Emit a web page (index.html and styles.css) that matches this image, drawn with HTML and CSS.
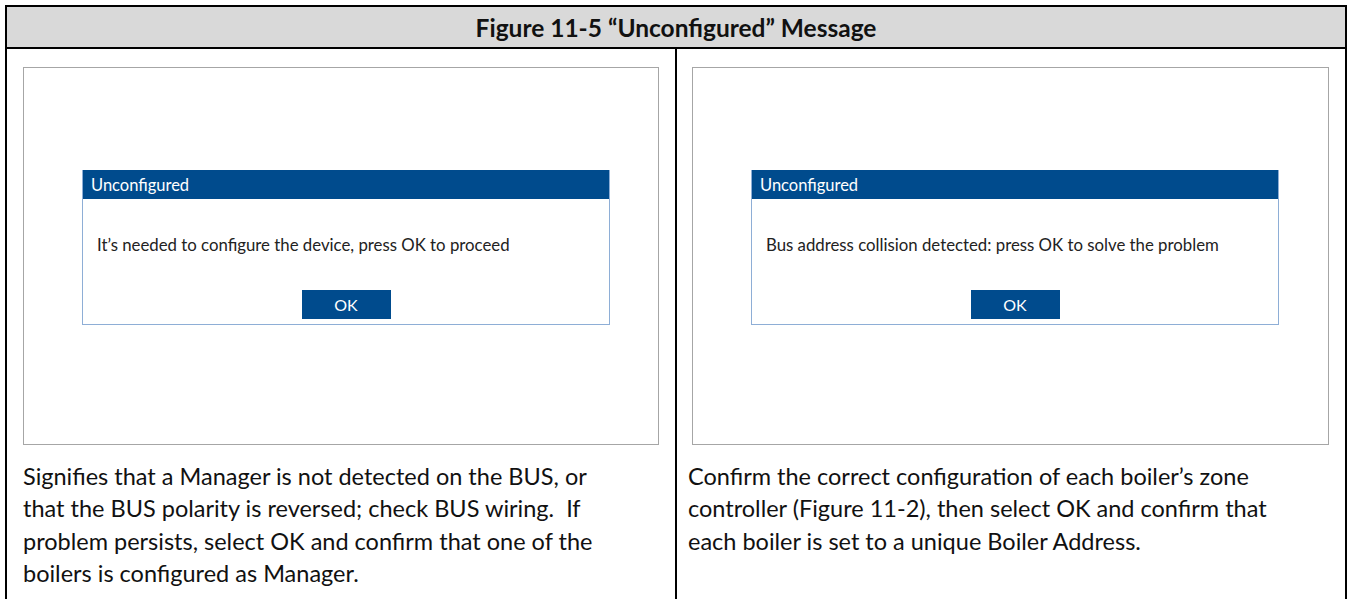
FILE: index.html
```html
<!DOCTYPE html>
<html>
  <head>
    <link rel="stylesheet" href="styles.css">
  </head>
<body>
<div class="figure">
  <div class="figure-title">Figure 11-5 “Unconfigured” Message</div>
  <div class="figure-body">
    <!--Left column: manager not detected-->
    <div class="cell cell-left">
      <div class="screen">
        <div class="dialog">
          <div class="dialog-title">Unconfigured</div>
          <div class="dialog-msg">It’s needed to configure the device, press OK to proceed</div>
          <div class="dialog-actions"><span class="ok-btn">OK</span></div>
        </div>
      </div>
      <p class="caption">Signifies that a Manager is not detected on the BUS, or that the BUS polarity is reversed; check BUS wiring.&nbsp; If problem persists, select OK and confirm that one of the boilers is configured as Manager.</p>
    </div>
    <!--Right column: address collision-->
    <div class="cell cell-right">
      <div class="screen">
        <div class="dialog">
          <div class="dialog-title">Unconfigured</div>
          <div class="dialog-msg">Bus address collision detected: press OK to solve the problem</div>
          <div class="dialog-actions"><span class="ok-btn">OK</span></div>
        </div>
      </div>
      <p class="caption">Confirm the correct configuration of each boiler’s zone controller (Figure 11-2), then select OK and confirm that each boiler is set to a unique Boiler Address.</p>
    </div>
  </div>
</div>
</body>
</html>
```

FILE: styles.css
```css
body{
  margin: 5px 0 0 5px;
  background-color: #ffffff;
  font-family: Lato, "Open Sans", sans-serif;
  color: #000000;
}
.figure{
  width: 1338px;
  border: 2px solid #000000;
  border-bottom: none;
}
.figure-title{
  height: 40px;
  line-height: 42px;
  background-color: #d9d9d9;
  border-bottom: 2px solid #000000;
  text-align: center;
  font-weight: bold;
  font-size: 24.5px;
  color: #111111;
}
.figure-body{
  display: grid;
  grid-template-columns: 670px 1fr;
  height: 560px;
}
.cell{
  padding: 18px 16px 0 16px;
}
.cell-left{
  border-right: 2px solid #000000;
}
.cell-right{
  padding-left: 15px;
}
.screen{
  border: 1px solid #a6a6a6;
  padding-top: 102px;
  box-sizing: border-box;
  height: 378px;
}
.dialog{
  width: 526px;
  margin-left: 58px;
  border: 1px solid #8eaed6;
  border-top: none;
  background-color: #ffffff;
}
.dialog-title{
  height: 29px;
  line-height: 30px;
  padding-left: 8px;
  background-color: #004b8d;
  color: #ffffff;
  font-size: 16.5px;
}
.dialog-msg{
  margin-top: 35px;
  padding-left: 14px;
  height: 21px;
  line-height: 21px;
  font-size: 16.8px;
  color: #222222;
}
.dialog-actions{
  margin-top: 35px;
  padding-bottom: 5px;
  text-align: center;
}
.ok-btn{
  display: inline-block;
  width: 89px;
  height: 29px;
  line-height: 29px;
  background-color: #004b8d;
  color: #ffffff;
  font-size: 16px;
  vertical-align: top;
}
.caption{
  width: 610px;
  margin: 15px 0 0 0;
  font-size: 23.5px;
  line-height: 32.3px;
  color: #111111;
}
.cell-right .caption{
  margin-left: -4px;
}
```
